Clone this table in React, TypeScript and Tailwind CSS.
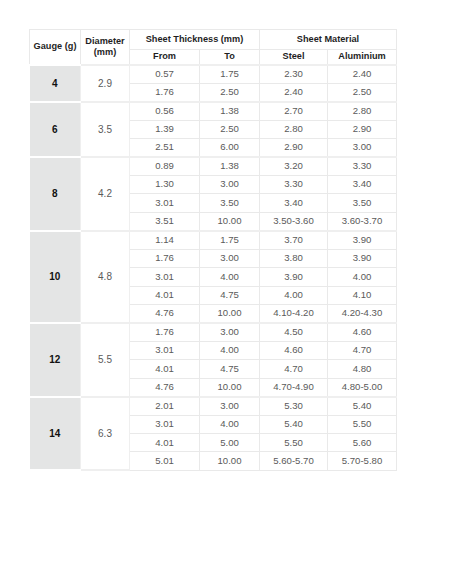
import React from 'react';

type Group = {
  gauge: string;
  diameter: string;
  rows: [string, string, string, string][];
};

const groups: Group[] = [
  {
    gauge: '4',
    diameter: '2.9',
    rows: [
      ['0.57', '1.75', '2.30', '2.40'],
      ['1.76', '2.50', '2.40', '2.50'],
    ],
  },
  {
    gauge: '6',
    diameter: '3.5',
    rows: [
      ['0.56', '1.38', '2.70', '2.80'],
      ['1.39', '2.50', '2.80', '2.90'],
      ['2.51', '6.00', '2.90', '3.00'],
    ],
  },
  {
    gauge: '8',
    diameter: '4.2',
    rows: [
      ['0.89', '1.38', '3.20', '3.30'],
      ['1.30', '3.00', '3.30', '3.40'],
      ['3.01', '3.50', '3.40', '3.50'],
      ['3.51', '10.00', '3.50-3.60', '3.60-3.70'],
    ],
  },
  {
    gauge: '10',
    diameter: '4.8',
    rows: [
      ['1.14', '1.75', '3.70', '3.90'],
      ['1.76', '3.00', '3.80', '3.90'],
      ['3.01', '4.00', '3.90', '4.00'],
      ['4.01', '4.75', '4.00', '4.10'],
      ['4.76', '10.00', '4.10-4.20', '4.20-4.30'],
    ],
  },
  {
    gauge: '12',
    diameter: '5.5',
    rows: [
      ['1.76', '3.00', '4.50', '4.60'],
      ['3.01', '4.00', '4.60', '4.70'],
      ['4.01', '4.75', '4.70', '4.80'],
      ['4.76', '10.00', '4.70-4.90', '4.80-5.00'],
    ],
  },
  {
    gauge: '14',
    diameter: '6.3',
    rows: [
      ['2.01', '3.00', '5.30', '5.40'],
      ['3.01', '4.00', '5.40', '5.50'],
      ['4.01', '5.00', '5.50', '5.60'],
      ['5.01', '10.00', '5.60-5.70', '5.70-5.80'],
    ],
  },
];

const th = 'border border-[#e9e9e9] font-bold text-[9.2px] text-[#1f1f1f] text-center align-middle p-0';
const td = 'border border-[#e9e9e9] text-[9.6px] text-[#5a5a5a] text-center align-middle p-0 h-[18.45px]';

export default function App() {
  return (
    <div className="min-h-[564px] w-[474px] bg-white pt-[29px] pl-[29px] font-['Liberation_Sans',Arial,sans-serif]">
      <table className="border-collapse table-fixed w-[367px]">
        <colgroup>
          <col className="w-[51px]" />
          <col className="w-[49px]" />
          <col className="w-[70px]" />
          <col className="w-[60px]" />
          <col className="w-[68px]" />
          <col className="w-[69px]" />
        </colgroup>
        <thead>
          <tr className="h-[20px]">
            <th rowSpan={2} className={th}>
              Gauge (g)
            </th>
            <th rowSpan={2} className={`${th} leading-[11px]`}>
              Diameter
              <br />
              (mm)
            </th>
            <th colSpan={2} className={th}>
              Sheet Thickness (mm)
            </th>
            <th colSpan={2} className={th}>
              Sheet Material
            </th>
          </tr>
          <tr className="h-[15px]">
            <th className={th}>From</th>
            <th className={th}>To</th>
            <th className={th}>Steel</th>
            <th className={th}>Aluminium</th>
          </tr>
        </thead>
        <tbody>
          {groups.map((g) =>
            g.rows.map((r, i) => (
              <tr key={g.gauge + '-' + i}>
                {i === 0 && (
                  <>
                    <td
                      rowSpan={g.rows.length}
                      className="border-y-2 border-x-0 border-white bg-[#e4e5e5] text-center align-middle p-0 font-bold text-[10px] text-[#111]"
                    >
                      {g.gauge}
                    </td>
                    <td
                      rowSpan={g.rows.length}
                      className="border-y-2 border-x border-[#efefef] text-center align-middle p-0 text-[10px] text-[#5a5a5a]"
                    >
                      {g.diameter}
                    </td>
                  </>
                )}
                {r.map((v, j) => (
                  <td
                    key={j}
                    className={`${td} ${i === 0 ? 'border-t-2 border-t-[#efefef]' : ''}`}
                  >
                    {v}
                  </td>
                ))}
              </tr>
            ))
          )}
        </tbody>
      </table>
    </div>
  );
}
